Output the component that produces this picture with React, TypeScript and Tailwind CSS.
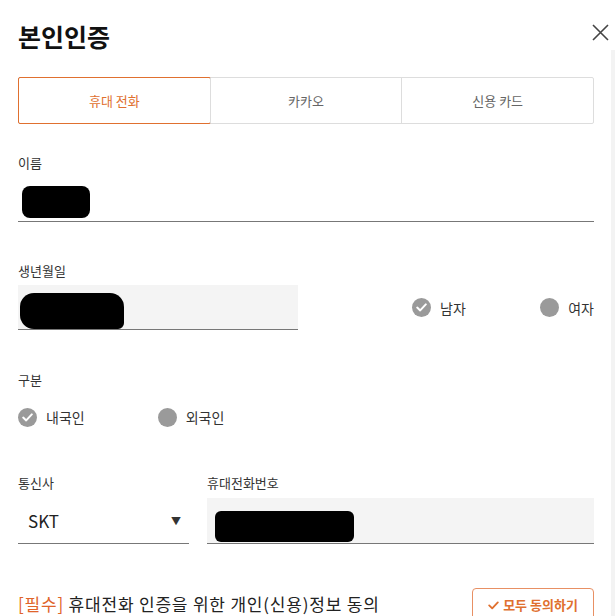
import React, { useState } from 'react';

const font = { fontFamily: '"Noto Sans CJK KR", "Noto Sans", sans-serif' };

function Radio({ label, checked }: { label: string; checked?: boolean }) {
  return (
    <div className="flex items-center gap-[9px]">
      <span className="flex h-[19px] w-[19px] items-center justify-center rounded-full bg-[#9a9a9a]">
        {checked && (
          <svg width="11" height="9" viewBox="0 0 11 9" fill="none">
            <path d="M1.2 4.6 L4.2 7.4 L9.8 1.4" stroke="white" strokeWidth="2" strokeLinecap="round" strokeLinejoin="round" />
          </svg>
        )}
      </span>
      <span className="text-[14px] leading-[20px] text-[#333]">{label}</span>
    </div>
  );
}

function Label({ children }: { children: React.ReactNode }) {
  return <div className="text-[13px] leading-[20px] text-[#333]">{children}</div>;
}

export default function App() {
  const [tab, setTab] = useState(0);
  const tabs = ['휴대 전화', '카카오', '신용 카드'];

  return (
    <div className="relative h-[616px] w-[615px] overflow-hidden bg-white" style={font}>
      {/* faint scrollbar track */}
      <div className="absolute right-0 top-[50px] h-[566px] w-[4px] bg-[#f3f3f3]" />

      <div className="px-[18px] pr-[21px]">
        <div className="mt-[19px] flex h-[34px] items-center justify-between">
          <h1 className="text-[25px] font-bold leading-[34px] text-[#111]">본인인증</h1>
          <button className="-mr-[15px] mt-[-7px] text-[#444]">
            <svg width="17" height="17" viewBox="0 0 17 17" fill="none">
              <path d="M1 1 L16 16 M16 1 L1 16" stroke="#444" strokeWidth="1.6" />
            </svg>
          </button>
        </div>

        <div className="mt-[24px] flex h-[47px] rounded-[2px] border border-[#dddddd]">
          {tabs.map((t, i) => (
            <button
              key={t}
              onClick={() => setTab(i)}
              className={
                i === tab
                  ? '-m-px flex flex-1 items-center justify-center rounded-[2px] border border-[#e0702f] text-[13px] text-[#e0702f]'
                  : 'flex flex-1 items-center justify-center border-l border-[#dddddd] text-[13px] text-[#666] first:border-l-0'
              }
            >
              {t}
            </button>
          ))}
        </div>

        <div className="mt-[29px]">
          <Label>이름</Label>
          <div className="mt-[3px] flex h-[46px] items-end border-b border-[#777] pb-[3px] pl-[4px]">
            <div className="h-[32px] w-[68px] rounded-[8px] bg-black" />
          </div>
        </div>

        <div className="mt-[39px] flex items-center">
          <div className="w-[280px]">
            <Label>생년월일</Label>
            <div className="mt-[4px] flex h-[45px] items-end border-b border-[#777] bg-[#f4f4f4] pl-[2px]">
              <div className="h-[36px] w-[104px] rounded-[14px] rounded-br-[6px] bg-black" />
            </div>
          </div>
          <div className="ml-auto mt-[24px] flex w-[182px] justify-between">
            <Radio label="남자" checked />
            <Radio label="여자" />
          </div>
        </div>

        <div className="mt-[40px]">
          <Label>구분</Label>
          <div className="mt-[17px] flex gap-[73px]">
            <Radio label="내국인" checked />
            <Radio label="외국인" />
          </div>
        </div>

        <div className="mt-[46px] flex gap-[18px]">
          <div className="w-[171px]">
            <Label>통신사</Label>
            <div className="mt-[5px] flex h-[46px] items-center justify-between border-b border-[#777] pl-[10px] pr-[8px]">
              <span className="text-[17px] text-[#222]">SKT</span>
              <span className="text-[10px] text-[#333]">▼</span>
            </div>
          </div>
          <div className="flex-1">
            <Label>휴대전화번호</Label>
            <div className="mt-[5px] flex h-[46px] items-end border-b border-[#777] bg-[#f4f4f4] pb-[1px] pl-[8px]">
              <div className="h-[31px] w-[139px] rounded-[6px] bg-black" />
            </div>
          </div>
        </div>

        <div className="mt-[44px] flex items-start justify-between">
          <div className="mt-[4px] text-[17px] leading-[24px] tracking-[0.8px] text-[#222]">
            <span className="text-[#e0642a]">[필수]</span> 휴대전화 인증을 위한 개인(신용)정보 동의
          </div>
          <button className="flex h-[34px] w-[122px] items-center justify-center gap-[4px] rounded-[4px] border border-[#e89064] text-[13px] font-bold text-[#e0702f]">
            <svg width="11" height="9" viewBox="0 0 11 9" fill="none">
              <path d="M1.2 4.4 L4.2 7.4 L9.8 1.4" stroke="#e0702f" strokeWidth="1.8" strokeLinecap="round" strokeLinejoin="round" />
            </svg>
            모두 동의하기
          </button>
        </div>
      </div>
    </div>
  );
}
